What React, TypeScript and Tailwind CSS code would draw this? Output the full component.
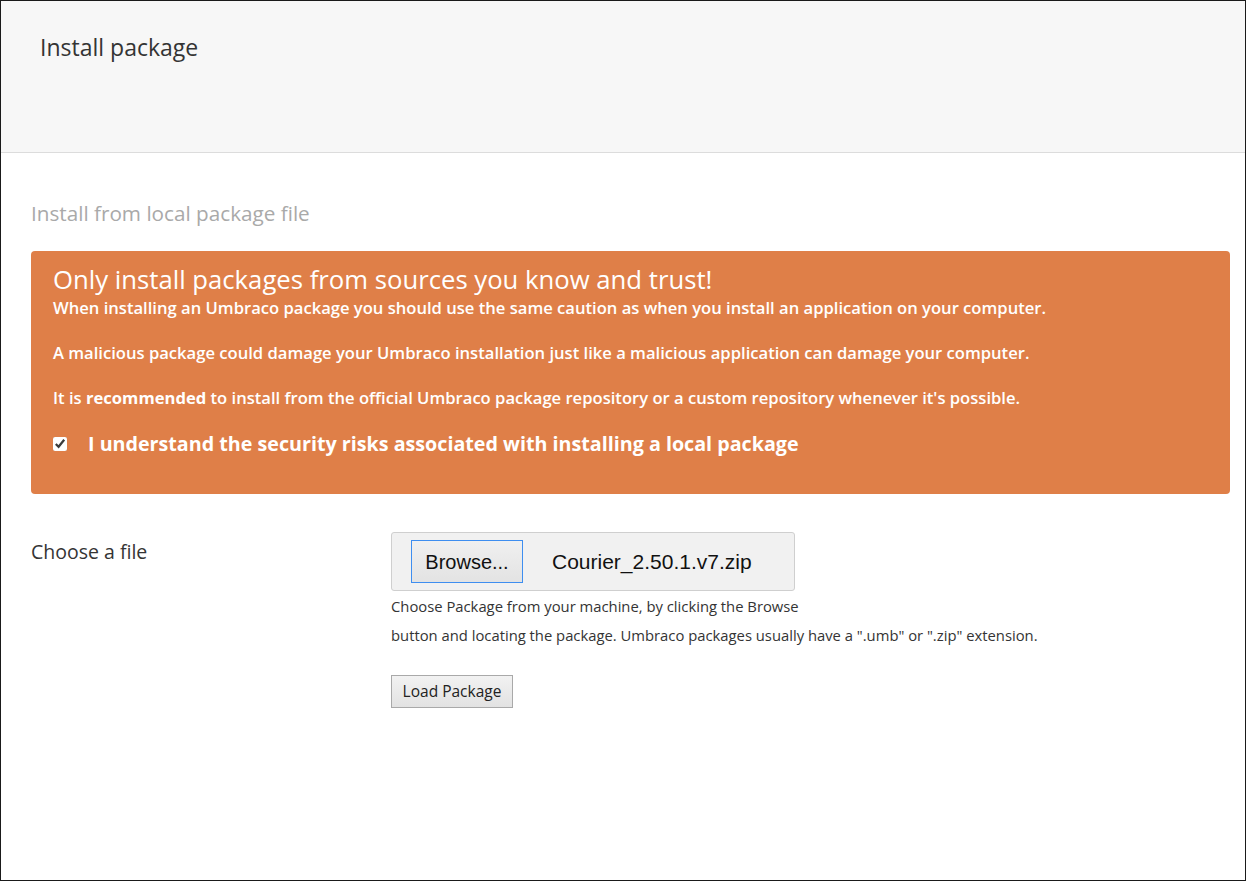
export default function App() {
  return (
    <div className="h-[881px] w-[1246px] overflow-hidden border border-[#1a1a1a] bg-white font-['Open_Sans',sans-serif] text-[#343434]">
      <header className="h-[152px] border-b border-[#dcdcdc] bg-[#f7f7f7] px-[39px] pt-[32px]">
        <h1 className="text-[23px] leading-[28px]">Install package</h1>
      </header>

      <main className="pl-[30px] pr-[15px] pt-[47px]">
        <h2 className="text-[20.7px] leading-[26px] text-[#a9a9a9]">Install from local package file</h2>

        <section className="mt-[25px] h-[243px] rounded-[4px] bg-[#df7f48] px-[22px] pt-[14px] text-white">
          <h3 className="text-[25.7px] leading-[29px]">Only install packages from sources you know and trust!</h3>
          <p className="mt-[4px] text-[16.6px] leading-[20px] font-semibold">
            When installing an Umbraco package you should use the same caution as when you install an application on your computer.
          </p>
          <p className="mt-[25px] text-[16.6px] leading-[20px] font-semibold">
            A malicious package could damage your Umbraco installation just like a malicious application can damage your computer.
          </p>
          <p className="mt-[25px] text-[16.6px] leading-[20px] font-semibold">
            It is <strong className="font-bold">recommended</strong> to install from the official Umbraco package repository or a custom repository whenever it's possible.
          </p>
          <label className="mt-[23px] flex items-center gap-[21px]">
            <input type="checkbox" defaultChecked className="h-[14px] w-[14px] accent-white" />
            <span className="text-[19.7px] leading-[26px] font-bold">I understand the security risks associated with installing a local package</span>
          </label>
        </section>

        <div className="mt-[38px] flex">
          <div className="w-[360px] pt-[7px] text-[19.5px] leading-[26px]">Choose a file</div>

          <div>
            <div className="flex h-[59px] w-[404px] items-center rounded-[3px] border border-[#cfcfcf] bg-[#f1f1f1] pl-[19px]">
              <button className="h-[43px] w-[112px] border border-[#3e8ef0] bg-gradient-to-b from-[#f0f0f0] to-[#e3e3e3] font-['Liberation_Sans',sans-serif] text-[20px] text-[#111]">
                Browse...
              </button>
              <span className="ml-[29px] font-['Liberation_Sans',sans-serif] text-[21px] text-[#111]">Courier_2.50.1.v7.zip</span>
            </div>
            <p className="mt-[1px] text-[14.8px] leading-[29px]">
              Choose Package from your machine, by clicking the Browse
              <br />
              button and locating the package. Umbraco packages usually have a ".umb" or ".zip" extension.
            </p>
            <button className="mt-[25px] h-[33px] w-[122px] border border-[#a9a9a9] bg-gradient-to-b from-[#f2f2f2] to-[#e2e2e2] text-[15.5px] text-[#222]">
              Load Package
            </button>
          </div>
        </div>
      </main>
    </div>
  );
}
